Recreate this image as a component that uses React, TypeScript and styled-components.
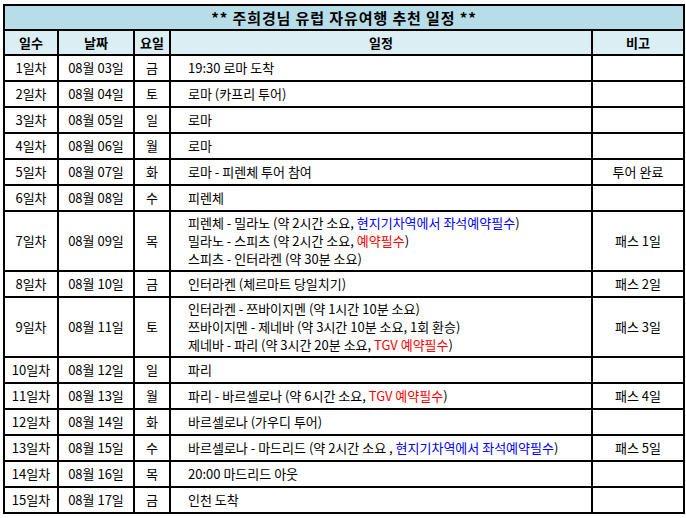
import React from 'react';
import styled, { createGlobalStyle } from 'styled-components';

type Part = { text: string; color?: 'blue' | 'red' };
type Row = { day: string; date: string; weekday: string; plan: Part[][]; note?: string };

const rows: Row[] = [
  { day: '1일차', date: '08월 03일', weekday: '금', plan: [[{ text: '19:30 로마 도착' }]] },
  { day: '2일차', date: '08월 04일', weekday: '토', plan: [[{ text: '로마 (카프리 투어)' }]] },
  { day: '3일차', date: '08월 05일', weekday: '일', plan: [[{ text: '로마' }]] },
  { day: '4일차', date: '08월 06일', weekday: '월', plan: [[{ text: '로마' }]] },
  { day: '5일차', date: '08월 07일', weekday: '화', plan: [[{ text: '로마 - 피렌체 투어 참여' }]], note: '투어 완료' },
  { day: '6일차', date: '08월 08일', weekday: '수', plan: [[{ text: '피렌체' }]] },
  {
    day: '7일차',
    date: '08월 09일',
    weekday: '목',
    plan: [
      [{ text: '피렌체 - 밀라노 (약 2시간 소요, ' }, { text: '현지기차역에서 좌석예약필수', color: 'blue' }, { text: ')' }],
      [{ text: '밀라노 - 스피츠 (약 2시간 소요, ' }, { text: '예약필수', color: 'red' }, { text: ')' }],
      [{ text: '스피츠 - 인터라켄 (약 30분 소요)' }],
    ],
    note: '패스 1일',
  },
  { day: '8일차', date: '08월 10일', weekday: '금', plan: [[{ text: '인터라켄 (체르마트 당일치기)' }]], note: '패스 2일' },
  {
    day: '9일차',
    date: '08월 11일',
    weekday: '토',
    plan: [
      [{ text: '인터라켄 - 쯔바이지멘 (약 1시간 10분 소요)' }],
      [{ text: '쯔바이지멘 - 제네바 (약 3시간 10분 소요, 1회 환승)' }],
      [{ text: '제네바 - 파리 (약 3시간 20분 소요, ' }, { text: 'TGV 예약필수', color: 'red' }, { text: ')' }],
    ],
    note: '패스 3일',
  },
  { day: '10일차', date: '08월 12일', weekday: '일', plan: [[{ text: '파리' }]] },
  {
    day: '11일차',
    date: '08월 13일',
    weekday: '월',
    plan: [[{ text: '파리 - 바르셀로나 (약 6시간 소요, ' }, { text: 'TGV 예약필수', color: 'red' }, { text: ')' }]],
    note: '패스 4일',
  },
  { day: '12일차', date: '08월 14일', weekday: '화', plan: [[{ text: '바르셀로나 (가우디 투어)' }]] },
  {
    day: '13일차',
    date: '08월 15일',
    weekday: '수',
    plan: [[{ text: '바르셀로나 - 마드리드 (약 2시간 소요 , ' }, { text: '현지기차역에서 좌석예약필수', color: 'blue' }, { text: ')' }]],
    note: '패스 5일',
  },
  { day: '14일차', date: '08월 16일', weekday: '목', plan: [[{ text: '20:00 마드리드 아웃' }]] },
  { day: '15일차', date: '08월 17일', weekday: '금', plan: [[{ text: '인천 도착' }]] },
];

const GlobalStyle = createGlobalStyle`
  body {
    margin: 0;
    background: #fff;
    font-family: "Noto Sans CJK KR", "Noto Sans", sans-serif;
    color: #000;
  }
`;

const Page = styled.div`
  padding: 4px 0 0 3px;
`;

const Table = styled.table`
  width: 680px;
  border-collapse: collapse;
  table-layout: fixed;
  font-size: 13px;
`;

const TitleCell = styled.th`
  height: 23px;
  padding: 0;
  background: #b7dde8;
  border: 2px solid #000;
  font-size: 15px;
  font-weight: 700;
  letter-spacing: 0.9px;
  line-height: 18px;
  text-align: center;
`;

const HeadCell = styled.th`
  height: 23px;
  padding: 0;
  background: #daeef3;
  border: 2px solid #000;
  font-size: 13px;
  font-weight: 700;
  line-height: 18px;
  text-align: center;
`;

const Cell = styled.td<{ $left?: boolean; $tall?: boolean }>`
  height: ${(p) => (p.$tall ? '58px' : '24px')};
  padding: ${(p) => (p.$left ? '0 0 0 17px' : '0')};
  border: 2px solid #000;
  line-height: 18px;
  text-align: ${(p) => (p.$left ? 'left' : 'center')};
  vertical-align: middle;
  white-space: nowrap;
`;

const Line = styled.div``;

const Mark = styled.span<{ $color?: 'blue' | 'red' }>`
  color: ${(p) => (p.$color === 'blue' ? '#0000ff' : p.$color === 'red' ? '#ff0000' : 'inherit')};
`;

export default function App() {
  return (
    <Page>
      <GlobalStyle />
      <Table>
        <colgroup>
          <col style={{ width: 54 }} />
          <col style={{ width: 76 }} />
          <col style={{ width: 36 }} />
          <col style={{ width: 422 }} />
          <col style={{ width: 92 }} />
        </colgroup>
        <thead>
          <tr>
            <TitleCell colSpan={5}>** 주희경님 유럽 자유여행 추천 일정 **</TitleCell>
          </tr>
          <tr>
            <HeadCell>일수</HeadCell>
            <HeadCell>날짜</HeadCell>
            <HeadCell>요일</HeadCell>
            <HeadCell>일정</HeadCell>
            <HeadCell>비고</HeadCell>
          </tr>
        </thead>
        <tbody>
          {rows.map((row) => {
            const tall = row.plan.length > 1;
            return (
              <tr key={row.day}>
                <Cell $tall={tall}>{row.day}</Cell>
                <Cell $tall={tall}>{row.date}</Cell>
                <Cell $tall={tall}>{row.weekday}</Cell>
                <Cell $tall={tall} $left>
                  {row.plan.map((line, i) => (
                    <Line key={i}>
                      {line.map((part, j) => (
                        <Mark key={j} $color={part.color}>
                          {part.text}
                        </Mark>
                      ))}
                    </Line>
                  ))}
                </Cell>
                <Cell $tall={tall}>{row.note ?? ''}</Cell>
              </tr>
            );
          })}
        </tbody>
      </Table>
    </Page>
  );
}
